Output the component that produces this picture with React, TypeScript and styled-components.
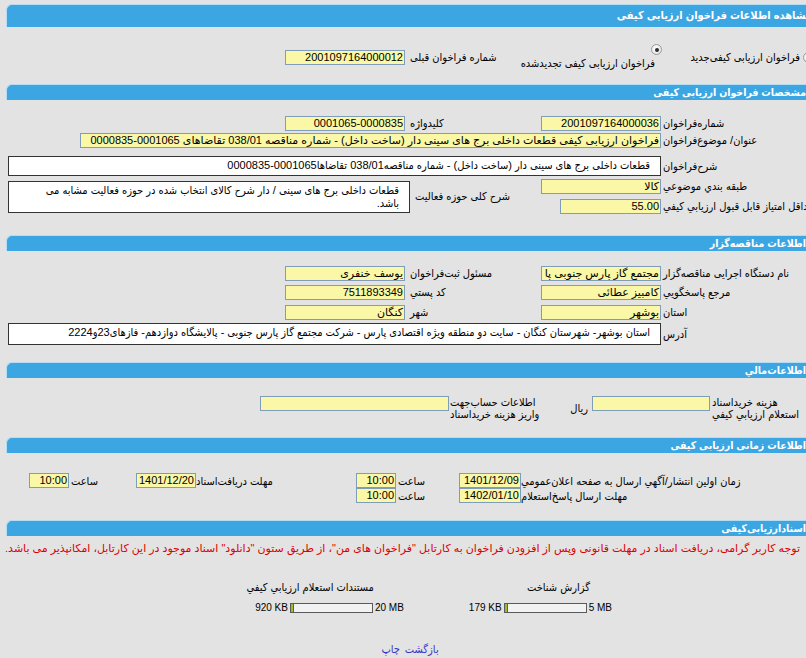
import React from "react";
import styled, { createGlobalStyle } from "styled-components";

const GlobalStyle = createGlobalStyle`
  html, body { margin: 0; padding: 0; background: #e3e3e3; overflow: hidden; }
  body {
    font-family: "Liberation Sans", "DejaVu Sans Condensed", "DejaVu Sans", sans-serif;
    font-size: 11px;
    color: #000;
  }
`;

const Viewport = styled.div`
  width: 806px;
  height: 658px;
  overflow: hidden;
`;

const Sheet = styled.div`
  width: 808px;
  margin-left: 6px;
  padding-top: 4px;
  direction: rtl;
`;

const Header = styled.div<{ $main?: boolean }>`
  box-sizing: border-box;
  height: ${(p) => (p.$main ? 23 : 16)}px;
  background: #3ba6e2;
  border-top: 1px solid #b4dcf3;
  border-left: 1px solid #b4dcf3;
  border-top-left-radius: 6px;
  color: #fff;
  font-family: "Liberation Sans", "DejaVu Sans Condensed", "DejaVu Sans", sans-serif;
  font-weight: bold;
  font-size: ${(p) => (p.$main ? 11 : 10.5)}px;
  line-height: ${(p) => (p.$main ? 21 : 14)}px;
  padding-right: ${(p) => (p.$main ? 2 : 8)}px;
  white-space: nowrap;
`;

const Body = styled.div<{ $pad: string }>`
  padding: ${(p) => p.$pad};
`;

const FormGrid = styled.div<{ $rows: string }>`
  display: grid;
  grid-template-columns: 151px 122px 131px 1fr;
  grid-template-rows: ${(p) => p.$rows};
  align-items: start;
`;

const Label = styled.div<{ $pad?: number; $center?: boolean; $at?: string }>`
  display: flex;
  justify-content: flex-end;
  white-space: nowrap;
  line-height: 15px;
  padding-left: ${(p) => p.$pad ?? 0}px;
  align-self: ${(p) => (p.$center ? "center" : "start")};
  ${(p) => (p.$at ? `grid-area: ${p.$at};` : "")}
`;

const Field = styled.div<{ $w: number; $inset?: number; $center?: boolean; $at?: string }>`
  box-sizing: border-box;
  width: ${(p) => p.$w}px;
  height: 15px;
  margin-right: ${(p) => p.$inset ?? 0}px;
  background: #faf7a6;
  border: 1px solid #7f9db9;
  font-family: "Liberation Sans", "DejaVu Sans", sans-serif;
  font-size: 11px;
  line-height: 13px;
  padding: 0 1px;
  white-space: nowrap;
  overflow: hidden;
  text-align: right;
  align-self: ${(p) => (p.$center ? "center" : "start")};
  flex-shrink: 0;
  ${(p) => (p.$at ? `grid-area: ${p.$at};` : "")}
`;

const TextBox = styled.div<{ $h: number; $at: string; $inset?: number }>`
  box-sizing: border-box;
  grid-area: ${(p) => p.$at};
  height: ${(p) => p.$h}px;
  margin-right: ${(p) => p.$inset ?? 0}px;
  margin-left: 2px;
  background: #fff;
  border: 1px solid #333;
  padding: 2px 10px 0 4px;
  line-height: 13px;
  white-space: nowrap;
  overflow: hidden;
  text-align: right;
  align-self: center;
`;

const RadioGroup = styled.div`
  grid-column: 1 / 3;
  display: flex;
  align-items: center;
  height: 26px;
`;

const RadioItem = styled.div<{ $stack?: boolean }>`
  display: flex;
  flex-shrink: 0;
  flex-direction: ${(p) => (p.$stack ? "column" : "row")};
  align-items: ${(p) => (p.$stack ? "flex-start" : "center")};
  gap: ${(p) => (p.$stack ? 1 : 3)}px;
  width: ${(p) => (p.$stack ? "auto" : "152px")};
  align-self: ${(p) => (p.$stack ? "stretch" : "center")};
`;

const RadioDot = styled.span<{ $on?: boolean }>`
  box-sizing: border-box;
  display: inline-flex;
  align-items: center;
  justify-content: center;
  width: 11px;
  height: 11px;
  border-radius: 50%;
  border: 1px solid #9a9a9a;
  background: radial-gradient(circle at 40% 40%, #ffffff, #dcdcdc);
  flex-shrink: 0;
  &::after {
    content: "";
    width: 4px;
    height: 4px;
    border-radius: 50%;
    background: ${(p) => (p.$on ? "#2b2b2b" : "transparent")};
  }
`;

const RadioText = styled.span<{ $indent?: number }>`
  white-space: nowrap;
  line-height: 14px;
  padding-right: ${(p) => p.$indent ?? 0}px;
`;

const Row = styled.div<{ $h?: number }>`
  display: flex;
  align-items: center;
  height: ${(p) => p.$h ?? 15}px;
`;

const Cell = styled.div<{ $w: number; $pad?: number; $right?: boolean }>`
  box-sizing: border-box;
  width: ${(p) => p.$w}px;
  flex-shrink: 0;
  text-align: ${(p) => (p.$right ? "right" : "left")};
  white-space: nowrap;
  padding-right: ${(p) => p.$pad ?? 0}px;
  line-height: 12px;
`;

const Note = styled.div`
  color: #dd0000;
  font-family: "Liberation Sans", "DejaVu Sans", sans-serif;
  white-space: nowrap;
  line-height: 13px;
  padding-right: 14px;
`;

const DocRow = styled.div`
  display: flex;
  gap: 65px;
  padding-right: 202px;
  margin-top: 26px;
`;

const DocCell = styled.div`
  display: flex;
  flex-direction: column;
  align-items: flex-start;
  gap: 10px;
`;

const DocTitle = styled.div<{ $offset: number }>`
  line-height: 12px;
  margin-right: ${(p) => p.$offset}px;
  white-space: nowrap;
`;

const SizeLine = styled.div`
  direction: ltr;
  display: flex;
  align-items: center;
  gap: 2px;
  font-size: 10px;
  line-height: 10px;
`;

const Bar = styled.div`
  box-sizing: border-box;
  width: 83px;
  height: 10px;
  border: 1px solid #5a5a5a;
  background: #f2f2f2;
  display: flex;
`;

const BarFill = styled.div`
  box-sizing: border-box;
  height: 100%;
  background: #9bbb2f;
  border-right: 1px solid #55701a;
`;

const Links = styled.div`
  display: flex;
  justify-content: center;
  gap: 5px;
  margin-top: 30px;
`;

const Link = styled.a`
  color: #3535c8;
  text-decoration: none;
  line-height: 13px;
  cursor: pointer;
`;

function SizeBar({ used, max, pct }: { used: string; max: string; pct: number }) {
  return (
    <SizeLine>
      <span>{used}</span>
      <Bar>
        <BarFill style={{ width: `${pct}%` }} />
      </Bar>
      <span>{max}</span>
    </SizeLine>
  );
}

export default function App() {
  return (
    <Viewport>
      <GlobalStyle />
      <Sheet>
        <Header $main>مشاهده اطلاعات فراخوان ارزیابی کیفی</Header>
        <Body $pad="17px 0 14px">
          <FormGrid $rows="26px">
            <RadioGroup>
              <RadioItem>
                <RadioDot />
                <RadioText>فراخوان  ارزیابی  کیفی‌جدید</RadioText>
              </RadioItem>
              <RadioItem $stack>
                <RadioDot $on />
                <RadioText $indent={7}>فراخوان  ارزیابی  کیفی  تجدیدشده</RadioText>
              </RadioItem>
            </RadioGroup>
            <Label $center $at="1 / 3">شماره فراخوان قبلی</Label>
            <Field $w={120} $inset={5} $center $at="1 / 4">2001097164000012</Field>
          </FormGrid>
        </Body>

        <Header>مشخصات فراخوان ارزیابی کیفی</Header>
        <Body $pad="16px 0 21px">
          <FormGrid $rows="17px 20px 26px 20px 15px">
            <Label $at="1 / 1">شماره‌فراخوان</Label>
            <Field $w={120} $inset={2} $at="1 / 2">2001097164000036</Field>
            <Label $at="1 / 3">کلیدواژه</Label>
            <Field $w={120} $inset={5} $at="1 / 4">0001065-0000835</Field>

            <Label $at="2 / 1">عنوان/  موضوع‌فراخوان</Label>
            <Field $w={581} $inset={2} $at="2 / 2 / 3 / 5">
              فراخوان ارزیابی کیفی قطعات داخلی برج های سینی دار (ساخت داخل) - شماره مناقصه 038/01 تقاضاهای 0001065-0000835
            </Field>

            <Label $center $at="3 / 1">شرح‌فراخوان</Label>
            <TextBox $h={20} $at="3 / 2 / 4 / 5" $inset={2}>
              قطعات  داخلی  برج  های  سینی  دار  (ساخت  داخل) - شماره  مناقصه038/01  تقاضاها0001065-0000835
            </TextBox>

            <Label $at="4 / 1">طبقه بندي موضوعي</Label>
            <Field $w={120} $inset={2} $at="4 / 2">کالا</Field>
            <Label $pad={5} $center $at="4 / 3 / 6 / 4">شرح  کلی  حوزه فعالیت</Label>
            <TextBox $h={32} $at="4 / 4 / 6 / 5">
              قطعات  داخلی  برج  های  سینی / دار  شرح  کالای  انتخاب  شده  در  حوزه  فعالیت  مشابه  می
              <br />
              باشد.
            </TextBox>

            <Label $at="5 / 1">حداقل  امتیاز قابل قبول  ارزیابي کيفي</Label>
            <Field $w={101} $inset={2} $at="5 / 2">55.00</Field>
          </FormGrid>
        </Body>

        <Header>اطلاعات مناقصه‌گزار</Header>
        <Body $pad="15px 0 17px">
          <FormGrid $rows="19px 20px 18px 22px">
            <Label $at="1 / 1">نام دستگاه اجرایی  مناقصه‌گزار</Label>
            <Field $w={120} $inset={2} $at="1 / 2">مجتمع گاز پارس جنوبی  پا</Field>
            <Label $at="1 / 3">مسئول ثبت‌فراخوان</Label>
            <Field $w={120} $inset={5} $at="1 / 4">یوسف خنفری</Field>

            <Label $at="2 / 1">مرجع پاسخگويي</Label>
            <Field $w={120} $inset={2} $at="2 / 2">کامبیز عطائی</Field>
            <Label $at="2 / 3">کد پستي</Label>
            <Field $w={120} $inset={5} $at="2 / 4">7511893349</Field>

            <Label $at="3 / 1">استان</Label>
            <Field $w={120} $inset={2} $at="3 / 2">بوشهر</Field>
            <Label $at="3 / 3">شهر</Label>
            <Field $w={120} $inset={5} $at="3 / 4">کنگان</Field>

            <Label $center $at="4 / 1">آدرس</Label>
            <TextBox $h={22} $at="4 / 2 / 5 / 5" $inset={2}>
              استان  بوشهر- شهرستان  کنگان - سایت  دو  منطقه  ویژه  اقتصادی  پارس - شرکت  مجتمع  گاز  پارس  جنوبی - پالایشگاه  دوازدهم- فازهای23و2224
            </TextBox>
          </FormGrid>
        </Body>

        <Header>اطلاعات‌مالي</Header>
        <Body $pad="18px 0 17px">
          <Row $h={24}>
            <Cell $w={102}>
              هزینه خریداسناد
              <br />
              استعلام  ارزيابي کيفي
            </Cell>
            <Field $w={118} $inset={2}></Field>
            <Cell $w={52} $right $pad={4}>ریال</Cell>
            <Cell $w={90}>
              اطلاعات حساب‌جهت
              <br />
              واریز  هزینه خریداسناد
            </Cell>
            <Field $w={189} $inset={1}></Field>
          </Row>
        </Body>

        <Header>اطلاعات  زمانی  ارزیابی کیفی</Header>
        <Body $pad="20px 0 17px">
          <Row>
            <Cell $w={293}>زمان  اولین  انتشار/آگهي  ارسال  به  صفحه  اعلان‌عمومي</Cell>
            <Field $w={62}>1401/12/09</Field>
            <Cell $w={61}>ساعت</Cell>
            <Field $w={40} $inset={2}>10:00</Field>
            <Cell $w={160}>مهلت  دریافت‌اسناد</Cell>
            <Field $w={60}>1401/12/20</Field>
            <Cell $w={65}>ساعت</Cell>
            <Field $w={40} $inset={2}>10:00</Field>
          </Row>
          <Row>
            <Cell $w={293}>مهلت  ارسال  پاسخ‌استعلام</Cell>
            <Field $w={62}>1402/01/10</Field>
            <Cell $w={61}>ساعت</Cell>
            <Field $w={40} $inset={2}>10:00</Field>
          </Row>
        </Body>

        <Header>اسناد‌ارزیابی‌کیفی</Header>
        <Body $pad="6px 0 0">
          <Note>
            توجه کاربر گرامی، دریافت اسناد در مهلت قانونی وپس از افزودن فراخوان به کارتابل "فراخوان های من"، از طریق ستون "دانلود" اسناد موجود در این کارتابل، امکانپذیر می باشد.
          </Note>
          <DocRow>
            <DocCell>
              <DocTitle $offset={22}>گزارش شناخت</DocTitle>
              <SizeBar used="179 KB" max="5 MB" pct={4} />
            </DocCell>
            <DocCell>
              <DocTitle $offset={30}>مستندات استعلام ارزيابي کيفي</DocTitle>
              <SizeBar used="920 KB" max="20 MB" pct={4} />
            </DocCell>
          </DocRow>
          <Links>
            <Link>بازگشت</Link>
            <Link>چاپ</Link>
          </Links>
        </Body>
      </Sheet>
    </Viewport>
  );
}
